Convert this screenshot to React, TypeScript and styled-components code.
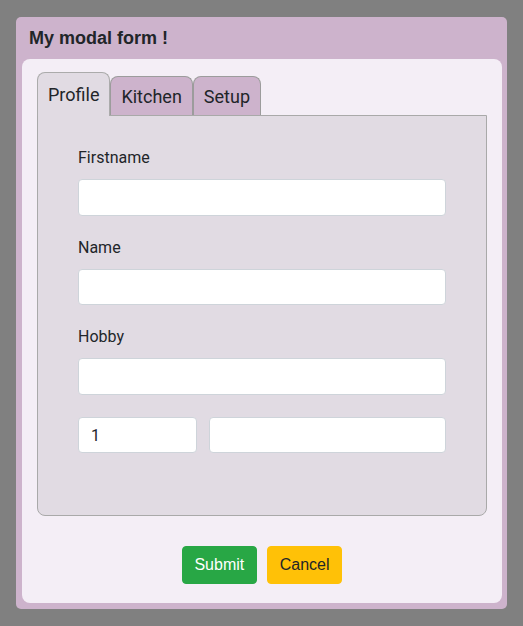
import React, { useState } from "react";
import styled, { createGlobalStyle, css } from "styled-components";

const Global = createGlobalStyle`
  html, body { margin: 0; padding: 0; }
  body {
    background: #808080;
    font-family: Roboto, "Liberation Sans", sans-serif;
    color: #212529;
  }
  * { box-sizing: border-box; }
`;

const Page = styled.div`
  width: 523px;
  height: 626px;
  display: flex;
  align-items: center;
  justify-content: center;
`;

const Modal = styled.div`
  width: 491px;
  height: 592px;
  background: #cdb3cc;
  border-radius: 5px;
  padding: 0 5px 6px 6px;
  display: flex;
  flex-direction: column;
`;

const Header = styled.div`
  height: 42px;
  display: flex;
  align-items: center;
  padding-left: 7px;
  font-family: "Liberation Sans", Arial, sans-serif;
  font-weight: bold;
  font-size: 18px;
  color: #212529;
`;

const Body = styled.div`
  flex: 1;
  background: #f4eef6;
  border-radius: 8px;
  padding: 13px 15px 0 15px;
  display: flex;
  flex-direction: column;
`;

const TabList = styled.div`
  display: flex;
  align-items: flex-end;
  position: relative;
  z-index: 1;
  margin-bottom: -1px;
`;

const Tab = styled.button<{ $active?: boolean }>`
  font-family: Roboto, sans-serif;
  font-size: 18px;
  color: #212529;
  border: 1px solid #9c9c9c;
  border-bottom: none;
  border-radius: 8px 8px 0 0;
  padding: 0 10px;
  cursor: pointer;
  ${(p) =>
    p.$active
      ? css`
          height: 44px;
          background: #e1dbe3;
          border-color: #ababab;
        `
      : css`
          height: 39px;
          margin-bottom: 1px;
          background: #cdb3cc;
        `}
`;

const Panel = styled.div`
  height: 401px;
  background: #e1dbe3;
  border: 1px solid #a9a9a9;
  border-radius: 0 0 8px 8px;
  padding: 30px 40px 0 40px;
`;

const Group = styled.div`
  display: flex;
  flex-direction: column;
  margin-bottom: 20px;
`;

const Label = styled.label`
  font-size: 16px;
  line-height: 24px;
  margin-bottom: 9px;
  color: #212529;
`;

const Input = styled.input`
  height: 36.6px;
  width: 100%;
  border: 1px solid #ced4da;
  border-radius: 4px;
  background: #fff;
  padding: 0 12px;
  font-family: Roboto, sans-serif;
  font-size: 16px;
  color: #212529;
  outline: none;
`;

const Row = styled.div`
  display: grid;
  grid-template-columns: 1fr 2fr;
  gap: 12px;
  padding-top: 2px;
`;

const Footer = styled.div`
  display: flex;
  justify-content: center;
  gap: 10px;
  padding-top: 30px;
`;

const Button = styled.button<{ $variant: "success" | "warning" }>`
  height: 38px;
  padding: 0 11.75px;
  border-radius: 4px;
  font-family: "Liberation Sans", Arial, sans-serif;
  font-size: 16px;
  border: 1px solid transparent;
  cursor: pointer;
  ${(p) =>
    p.$variant === "success"
      ? css`
          background: #28a745;
          border-color: #28a745;
          color: #fff;
        `
      : css`
          background: #ffc107;
          border-color: #ffc107;
          color: #212529;
        `}
`;

const tabs = ["Profile", "Kitchen", "Setup"];

export default function App() {
  const [active, setActive] = useState(0);
  return (
    <>
      <Global />
      <Page>
        <Modal>
          <Header>My modal form !</Header>
          <Body>
            <TabList>
              {tabs.map((t, i) => (
                <Tab key={t} $active={i === active} onClick={() => setActive(i)}>
                  {t}
                </Tab>
              ))}
            </TabList>
            <Panel>
              <Group>
                <Label>Firstname</Label>
                <Input />
              </Group>
              <Group>
                <Label>Name</Label>
                <Input />
              </Group>
              <Group>
                <Label>Hobby</Label>
                <Input />
              </Group>
              <Row>
                <Input defaultValue="1" />
                <Input />
              </Row>
            </Panel>
            <Footer>
              <Button $variant="success">Submit</Button>
              <Button $variant="warning">Cancel</Button>
            </Footer>
          </Body>
        </Modal>
      </Page>
    </>
  );
}
